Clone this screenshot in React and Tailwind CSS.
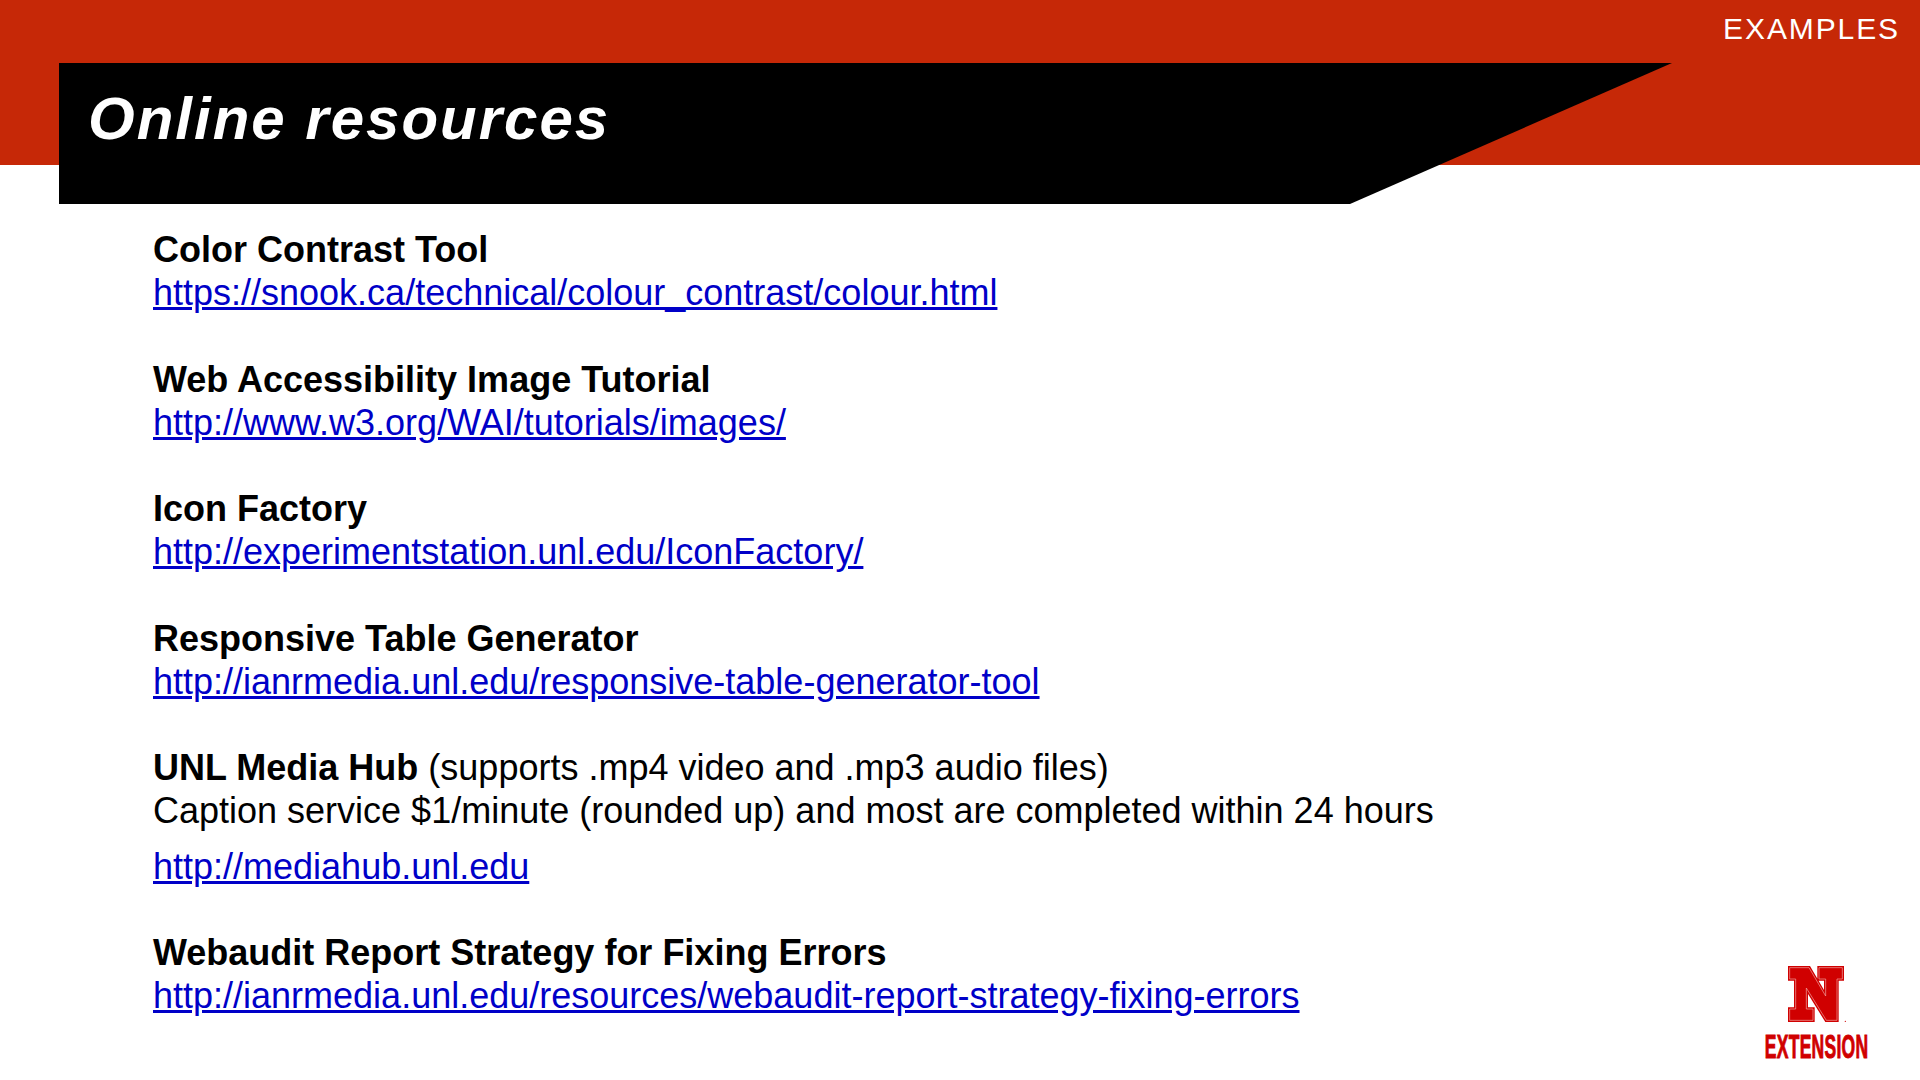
const resources = [
  {
    title: "Color Contrast Tool",
    url: "https://snook.ca/technical/colour_contrast/colour.html",
  },
  {
    title: "Web Accessibility Image Tutorial",
    url: "http://www.w3.org/WAI/tutorials/images/",
  },
  {
    title: "Icon Factory",
    url: "http://experimentstation.unl.edu/IconFactory/",
  },
  {
    title: "Responsive Table Generator",
    url: "http://ianrmedia.unl.edu/responsive-table-generator-tool",
  },
  {
    title: "UNL Media Hub",
    note: " (supports .mp4 video and .mp3 audio files)",
    detail: "Caption service $1/minute (rounded up) and most are completed within 24 hours",
    url: "http://mediahub.unl.edu",
  },
  {
    title: "Webaudit Report Strategy for Fixing Errors",
    url: "http://ianrmedia.unl.edu/resources/webaudit-report-strategy-fixing-errors",
  },
];

function Logo() {
  return (
    <div className="flex flex-col items-center">
      <svg width="58" height="58" viewBox="0 0 174 174">
        <path
          d="M0 0H66L108 72V44H88V0H168V44H152V168H112L60 84V124H80V168H0V124H18V44H0Z"
          fill="#d00000"
        />
        <path
          d="M5 5H63L113 90V39H93V5H163V39H147V163H115L55 66V129H75V163H5V129H23V39H5Z"
          fill="none"
          stroke="#f0a8a4"
          strokeWidth="2"
        />
        <circle cx="172" cy="166" r="2" fill="#d00000" />
      </svg>
      <span className="mt-[10px] origin-center scale-x-[0.53] font-['Liberation_Sans',sans-serif] text-[33px] leading-[26px] font-bold tracking-[0.5px] text-[#d00000] [-webkit-text-stroke:1px_#d00000]">
        EXTENSION
      </span>
    </div>
  );
}

export default function App() {
  return (
    <div className="relative h-[1080px] w-[1920px] overflow-hidden bg-white font-['Liberation_Sans',Arial,sans-serif] text-black">
      <header className="relative h-[165px] bg-[#c62807] pt-[63px] pl-[59px]">
        <div className="h-[141px] w-[1613px] bg-black pt-[22px] pl-[29px] [clip-path:polygon(0_0,100%_0,1291px_100%,0_100%)]">
          <h1 className="text-[60px] leading-[68px] font-bold tracking-[2px] text-white italic">
            Online resources
          </h1>
        </div>
        <span className="absolute top-[11px] right-[20px] text-[30px] leading-[36px] tracking-[1.9px] text-white">
          EXAMPLES
        </span>
      </header>

      <main className="pt-[63px] pl-[153px] text-[36px] leading-[43.2px]">
        {resources.map((r) => (
          <section key={r.title} className="mb-[43.1px]">
            <p>
              <strong className="font-bold">{r.title}</strong>
              {r.note}
            </p>
            {r.detail && <p className="mb-[12.5px]">{r.detail}</p>}
            <a href={r.url} className="text-[#0000c8] underline">
              {r.url}
            </a>
          </section>
        ))}
      </main>

      <div className="absolute top-[966px] left-[1766px] w-[101px]">
        <Logo />
      </div>
    </div>
  );
}
